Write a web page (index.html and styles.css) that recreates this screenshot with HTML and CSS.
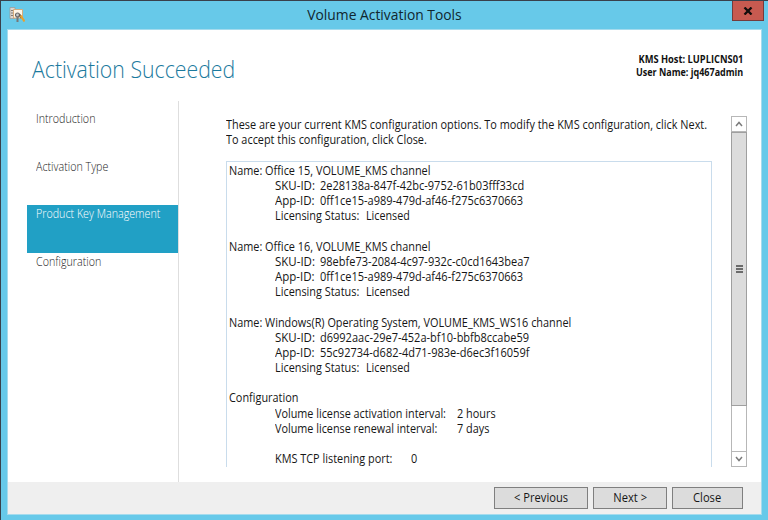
FILE: index.html
```
<!DOCTYPE html>
<html lang="en">
<head>
<meta charset="utf-8">
<title>Volume Activation Tools</title>
<link rel="stylesheet" href="styles.css">
</head>
<body>
<div class="window">
  <header class="titlebar">
    <svg class="app-icon" viewBox="0 0 16 16" width="16" height="16">
      <path d="M1 .5h5v11H1z" fill="#dcd6d0" stroke="#9b9793" stroke-width=".7"/>
      <path d="M2 3.500h3M2 6h3M2 8.500h3" stroke="#817b76"/>
      <path d="M4.500 2.500h9v8.500h-9z" fill="#fff5e7" stroke="#d5a774" stroke-width=".9"/>
      <circle cx="8.500" cy="8" r="2" fill="#c9c9c9" stroke="#666" stroke-width="1.200"/>
      <path d="M8.500 9.500v5.500" stroke="#777" stroke-width="2"/>
      <path d="M10.500 7.500l2 3.500" stroke="#6b5a48" stroke-width="2"/>
      <path d="M11.500 8.500l4 6" stroke="#e8a02d" stroke-width="2.200"/>
    </svg>
    <h1 class="title">Volume Activation Tools</h1>
    <button class="close" aria-label="Close window"><svg viewBox="0 0 10 8" width="10" height="8"><path d="M1.500 .5L8.500 7.500M8.500 .5L1.500 7.500" stroke="#120d0c" stroke-width="2.300"/></svg></button>
  </header>
  <main class="client">
    <div class="heading-row">
      <h2 class="heading">Activation Succeeded</h2>
      <div class="host"><div class="kms-host">KMS Host: LUPLICNS01</div><div class="user-name">User Name: jq467admin</div></div>
    </div>
    <div class="body">
      <nav class="nav">
        <div class="step"><span>Introduction</span></div>
        <div class="step"><span>Activation Type</span></div>
        <div class="step active"><span>Product Key Management</span></div>
        <div class="step"><span>Configuration</span></div>
      </nav>
      <section class="content">
        <div class="intro"><div><span>These are your current KMS configuration options. To modify the KMS configuration, click Next.</span></div><div><span>To accept this configuration, click Close.</span></div></div>
        <div class="details">
          <div class="line"><span>Name: Office 15, VOLUME_KMS channel</span></div>
          <div class="line sub"><span class="key id">SKU-ID:</span><span class="guid">2e28138a-847f-42bc-9752-61b03fff33cd</span></div>
          <div class="line sub"><span class="key id">App-ID:</span><span class="guid">0ff1ce15-a989-479d-af46-f275c6370663</span></div>
          <div class="line sub"><span class="key status">Licensing Status:</span><span class="state">Licensed</span></div>
          <div class="line"></div>
          <div class="line"><span>Name: Office 16, VOLUME_KMS channel</span></div>
          <div class="line sub"><span class="key id">SKU-ID:</span><span class="guid">98ebfe73-2084-4c97-932c-c0cd1643bea7</span></div>
          <div class="line sub"><span class="key id">App-ID:</span><span class="guid">0ff1ce15-a989-479d-af46-f275c6370663</span></div>
          <div class="line sub"><span class="key status">Licensing Status:</span><span class="state">Licensed</span></div>
          <div class="line"></div>
          <div class="line"><span>Name: Windows(R) Operating System, VOLUME_KMS_WS16 channel</span></div>
          <div class="line sub"><span class="key id">SKU-ID:</span><span class="guid">d6992aac-29e7-452a-bf10-bbfb8ccabe59</span></div>
          <div class="line sub"><span class="key id">App-ID:</span><span class="guid">55c92734-d682-4d71-983e-d6ec3f16059f</span></div>
          <div class="line sub"><span class="key status">Licensing Status:</span><span class="state">Licensed</span></div>
          <div class="line"></div>
          <div class="line"><span>Configuration</span></div>
          <div class="line sub"><span class="key interval">Volume license activation interval:</span><span>2 hours</span></div>
          <div class="line sub"><span class="key interval">Volume license renewal interval:</span><span>7 days</span></div>
          <div class="line"></div>
          <div class="line sub"><span class="key port">KMS TCP listening port:</span><span>0</span></div>
        </div>
      </section>
      <div class="scrollbar">
        <div class="arrow up"><svg viewBox="0 0 8 6" width="8" height="6"><path d="M1 5L4 1.500L7 5" fill="none" stroke="#7b7b7b" stroke-width="1.500"/></svg></div>
        <div class="thumb"><i></i><i></i><i></i></div>
        <div class="track"></div>
        <div class="arrow down"><svg viewBox="0 0 8 6" width="8" height="6"><path d="M1 1L4 4.500L7 1" fill="none" stroke="#7b7b7b" stroke-width="1.500"/></svg></div>
      </div>
    </div>
    <footer class="footer">
      <button class="btn prev"><span>&lt; Previous</span></button>
      <button class="btn next"><span>Next &gt;</span></button>
      <button class="btn done"><span>Close</span></button>
    </footer>
  </main>
</div>
</body>
</html>
```
FILE: styles.css
```
* { box-sizing: border-box; }
body { margin: 0; font-family: "Open Sans", "Noto Sans", sans-serif; font-size: 12px; color: #161616; }
/* Condensed text */
span { display: inline-block; transform: scaleX(.907); transform-origin: left; }
.window { width: 768px; height: 520px; background: #67c9e9; border-top: 1px solid #39404b; border-left: 1px solid #39404b; display: flex; flex-direction: column; padding: 0 6px 5px 6px; overflow: hidden; }
.titlebar { height: 28px; flex: none; display: grid; grid-template-columns: 60px 1fr 60px; }
.app-icon { margin: 6px 0 0 2px; }
.title { margin: 0; font-size: 15px; line-height: 27px; font-weight: 400; text-align: center; color: #10262f; white-space: nowrap; transform: scaleX(.923); }
.close { justify-self: end; width: 32px; height: 20px; margin: 0 -2px 0 0; padding: 0; background: #c75a50; border: 1px solid #743b3c; border-top: 0; display: flex; align-items: center; justify-content: center; }
.client { flex: 1; display: flex; flex-direction: column; background: #fff; border: 1px solid #a5dbed; min-height: 0; }
.heading-row { height: 71px; flex: none; display: flex; justify-content: space-between; padding: 0 18px 0 24px; }
.heading { margin: 19px 0 0; font-size: 24px; line-height: 40px; font-weight: 300; color: #1b7a9e; white-space: nowrap; transform: scaleX(.887); transform-origin: left; }
.host { margin-top: 23px; font-size: 10px; line-height: 12.500px; font-weight: 700; text-align: right; color: #111; white-space: nowrap; }
.kms-host { transform: scaleX(.93); transform-origin: right; }
.user-name { transform: scaleX(.9); transform-origin: right; }
.body { flex: 1; min-height: 0; display: flex; }
.nav { width: 152px; margin-left: 19px; flex: none; border-right: 1px solid #dedede; padding-top: 9px; color: #222; font-weight: 300; white-space: nowrap; }
.nav span { transform: scaleX(.893); }
.step { height: 47.500px; padding-left: 9px; line-height: 18px; }
.step.active { background: #21a0c5; color: #fff; }
.content { width: 486px; margin: 16px 19px 15px 47px; display: flex; flex-direction: column; min-height: 0; white-space: nowrap; flex: none; }
.intro { line-height: 15px; height: 44px; flex: none; }
.details { flex: 1; min-height: 0; overflow: hidden; border: 1px solid #c9dcec; border-bottom: 0; padding: 1px 0 0 2px; }
.line { height: 15.160px; line-height: 15px; display: flex; }
.sub { padding-left: 46px; }
.key { flex: none; }
.id { width: 45px; transform: scaleX(.957); }
.guid { transform: scaleX(.917); }
.status { width: 91px; }
.state { transform: scaleX(.895); }
.interval { width: 182px; transform: scaleX(.901); }
.port { width: 136px; }
.scrollbar { width: 16px; flex: none; margin: 15px 0; display: flex; flex-direction: column; }
.arrow { height: 16px; flex: none; border: 1px solid #b7b7b7; background: #fff; display: flex; align-items: center; justify-content: center; }
.thumb { height: 274px; flex: none; background: #dcdcdc; border: 1px solid #9f9f9f; display: flex; flex-direction: column; align-items: center; justify-content: center; gap: 1px; }
.thumb i { width: 7px; height: 2px; background: #6b6b6b; }
.track { flex: 1; border: solid #b7b7b7; border-width: 0 1px; background: #fff; }
.footer { height: 32px; flex: none; background: #efefef; display: flex; justify-content: flex-end; align-items: center; gap: 5px; padding-right: 18px; }
.btn { height: 22px; padding: 0; font: inherit; line-height: 18px; color: #161616; background: #dcdcdc; border: 1px solid #7f7f7f; white-space: nowrap; }
.btn span { transform: scaleX(.93); transform-origin: center; }
.prev { width: 94px; }
.next { width: 74px; }
.done { width: 71px; }
```
